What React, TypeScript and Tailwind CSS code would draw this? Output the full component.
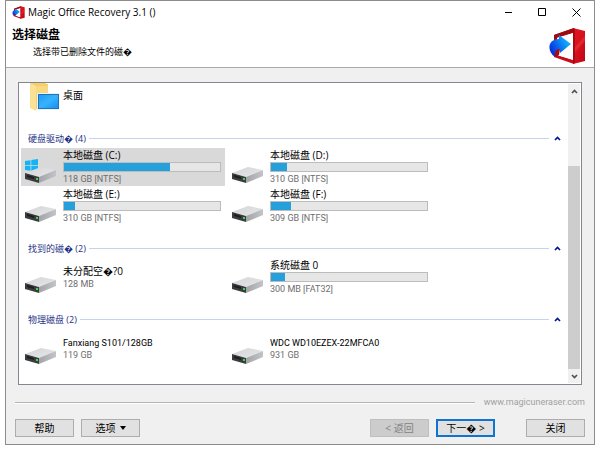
import type { ReactNode } from "react";

type Volume = { name: string; size: string; used?: number; system?: boolean; selected?: boolean };
type Group = { title: string; count: number; volumes: Volume[] };

const groups: Group[] = [
  {
    title: "硬盘驱动\uFFFD",
    count: 4,
    volumes: [
      { name: "本地磁盘 (C:)", size: "118 GB [NTFS]", used: 68, system: true, selected: true },
      { name: "本地磁盘 (D:)", size: "310 GB [NTFS]", used: 10 },
      { name: "本地磁盘 (E:)", size: "310 GB [NTFS]", used: 7 },
      { name: "本地磁盘 (F:)", size: "309 GB [NTFS]", used: 13 },
    ],
  },
  {
    title: "找到的磁\uFFFD",
    count: 2,
    volumes: [
      { name: "未分配空\uFFFD?0", size: "128 MB" },
      { name: "系统磁盘 0", size: "300 MB [FAT32]", used: 9 },
    ],
  },
  {
    title: "物理磁盘",
    count: 2,
    volumes: [
      { name: "Fanxiang S101/128GB", size: "119 GB" },
      { name: "WDC WD10EZEX-22MFCA0", size: "931 GB" },
    ],
  },
];

function Logo({ className }: { className: string }) {
  return (
    <svg viewBox="0 0 38 38" className={className} aria-hidden="true">
      <defs>
        <linearGradient id="red" x1="0" y1="0" x2="1" y2="1">
          <stop offset="0" stopColor="#e01822" />
          <stop offset="0.5" stopColor="#d8101c" />
          <stop offset="1" stopColor="#b80812" />
        </linearGradient>
        <linearGradient id="blue" x1="0" y1="0.8" x2="1" y2="0.2">
          <stop offset="0" stopColor="#0a1fd8" />
          <stop offset="0.45" stopColor="#0a6cf0" />
          <stop offset="1" stopColor="#14c8ff" />
        </linearGradient>
      </defs>
      <path d="M6 8 26 1v5L9 11v17l17 5v4L6 30Z" fill="#c20f18" />
      <path d="M9 11 25 6v27L9 28Z" fill="#fff" />
      <path d="M6 8 26 1v4L9 10v4H6Z" fill="#9c0b12" />
      <path d="M25 1 37 4v30l-12 3Z" fill="url(#red)" />
      <path d="M25 1 27 2v34l-2 1Z" fill="#a80912" />
      <path d="m27 20 10-11v5L27 25Z" fill="#f04a50" opacity="0.4" />
      <path d="M6 22h6l-1 6-3 2-2-2Z" fill="#a30a14" />
      <path d="M11 8 23 17 12 26v-4c-4 0-6 3-5 8C-1 25-1 12 11 12Z" fill="url(#blue)" />
    </svg>
  );
}

function DriveIcon() {
  return (
    <svg viewBox="0 0 32 17" className="h-[17px] w-8" aria-hidden="true">
      <defs>
        <linearGradient id="top" x1="0" y1="0" x2="1" y2="1">
          <stop offset="0" stopColor="#d4d5d7" />
          <stop offset="1" stopColor="#e6e7e9" />
        </linearGradient>
        <linearGradient id="side" x1="0" y1="0" x2="1" y2="0">
          <stop offset="0" stopColor="#a2a4a8" />
          <stop offset="1" stopColor="#c2c4c7" />
        </linearGradient>
      </defs>
      <path d="M0 7 16 1l15 3-16 7Z" fill="url(#top)" />
      <path d="M14 11 31 4v6l-17 7Z" fill="url(#side)" />
      <path d="m0 7 14 4v6L0 13Z" fill="#3a3c3f" />
      <path d="m2 9 7 2v2l-7-2Z" fill="#1d1e20" />
      <rect x="11" y="12" width="2" height="2" fill="#33e03c" />
    </svg>
  );
}

function WindowsMark() {
  return (
    <svg viewBox="0 0 13 13" className="h-[13px] w-[13px]" aria-hidden="true">
      <path d="M0 2 5.500 1.200V6H0ZM6.300 1.100 13 0v6H6.300ZM0 6.800h5.500v4.900L0 11ZM6.300 6.800H13V13l-6.700-1.100Z" fill="#12b4f5" />
    </svg>
  );
}

function DesktopIcon() {
  return (
    <svg viewBox="0 0 32 28" className="h-7 w-8" aria-hidden="true">
      <defs>
        <linearGradient id="screen" x1="0" y1="0" x2="1" y2="1">
          <stop offset="0" stopColor="#1f9cf5" />
          <stop offset="0.5" stopColor="#36b2fd" />
          <stop offset="1" stopColor="#1290f0" />
        </linearGradient>
      </defs>
      <path d="M3 0h16v1h2v25H7L3 24Z" fill="#f4cf6c" />
      <path d="M3 0 9 3v25l-6-3Z" fill="#fbe193" />
      <path d="M9 3h12v7H9Z" fill="#f8d980" />
      <rect x="10" y="10" width="23" height="17" fill="#e9f3fb" />
      <rect x="11.500" y="11.500" width="20" height="14" fill="url(#screen)" stroke="#2273b5" />
    </svg>
  );
}

function Chevron({ down = false }: { down?: boolean }) {
  return (
    <svg viewBox="0 0 7 5" className="h-[5px] w-[7px]" aria-hidden="true">
      <path d={down ? "M1 1 3.500 3.500 6 1" : "M1 4 3.500 1.500 6 4"} fill="none" stroke="currentColor" strokeWidth="1.700" />
    </svg>
  );
}

function VolumeTile({ v }: { v: Volume }) {
  const hasBar = v.used !== undefined;
  return (
    <li className={`flex h-[38px] gap-[6px] pr-1 pl-1 ${v.selected ? "bg-[#d9d9d9]" : ""}`}>
      <div className="flex w-8 shrink-0 flex-col justify-end pb-[3px]">
        {v.system && <WindowsMark />}
        <div className={v.system ? "-mt-[6px]" : ""}>
          <DriveIcon />
        </div>
      </div>
      <div className={`min-w-0 flex-1 whitespace-nowrap ${hasBar ? "pt-px" : "pt-[7px]"}`}>
        <div className="h-[13px] text-[10px] leading-[13px] text-black">
          {/^[A-Z]/.test(v.name) ? <span className="font-['Roboto',sans-serif] text-[9px]">{v.name}</span> : v.name}
        </div>
        {hasBar && (
          <div
            role="progressbar"
            aria-label={v.name}
            aria-valuenow={v.used}
            className="mb-px h-[10px] border border-[#bcbcbc] bg-[#e6e6e6]"
          >
            <div className="h-full bg-[#26a0da]" style={{ width: `${v.used}%` }} />
          </div>
        )}
        <div className="font-['Roboto',sans-serif] text-[9px] leading-[13px] text-[#6d6d6d]">{v.size}</div>
      </div>
    </li>
  );
}

function VolumeGroup({ group }: { group: Group }) {
  return (
    <section className="mb-3">
      <div className="flex h-5 items-center px-[7px]">
        <h2 className="pt-[2px] text-[9px] whitespace-pre text-[#1e3287]">
          {group.title} ({group.count})
        </h2>
        <div className="mr-[5px] ml-[3px] h-px flex-1 bg-[#c6d3ea]" />
        <button type="button" aria-label="收起" className="flex h-3 items-center text-[#00149a]">
          <Chevron />
        </button>
      </div>
      <ul className="grid grid-cols-[204px_204px] gap-x-[3px] gap-y-px pb-px">
        {group.volumes.map((v) => (
          <VolumeTile key={v.name} v={v} />
        ))}
      </ul>
    </section>
  );
}

function PushButton({ children, variant = "normal" }: { children: ReactNode; variant?: "normal" | "default" | "disabled" }) {
  const look = {
    normal: "border border-[#adadad] bg-[#e1e1e1] text-black",
    default: "border-2 border-[#0f74d0] bg-[#e1e1e1] text-black",
    disabled: "border border-[#bfbfbf] bg-[#cccccc] text-[#838383]",
  }[variant];
  return (
    <button
      type="button"
      disabled={variant === "disabled"}
      className={`flex h-[18px] w-[59px] items-center justify-center gap-1 text-[10px] leading-none whitespace-nowrap ${look}`}
    >
      {children}
    </button>
  );
}

const watermarks = [
  { text: "多多软件站", place: "top-[96px] left-[94px] text-[18px]" },
  { text: "多多软件站", place: "top-[96px] left-[394px] text-[18px]" },
  { text: "多多软件站", place: "top-[396px] left-[94px] text-[18px]" },
  { text: "多多软件站", place: "top-[396px] left-[394px] text-[18px]" },
  { text: "www.ddooo.com", place: "top-[148px] left-[168px] text-[22px]" },
  { text: "www.ddooo.com", place: "top-[148px] left-[468px] text-[22px]" },
];

export default function App() {
  return (
    <div className="relative overflow-hidden bg-white px-[5px] pb-[5px] font-['Open_Sans','Noto_Sans_CJK_SC',sans-serif]">
      <main className="border border-[#8c8c8c] bg-[#f0f0f0]">
        <header className="h-[67px] border-b border-[#a8a8a8] bg-white">
          <div className="flex h-[22px] items-center pr-[13px] pl-[6px]">
            <Logo className="h-[13px] w-[13px]" />
            <h1 className="ml-[3px] text-[10px] text-black">Magic Office Recovery 3.1 ()</h1>
            <div className="ml-auto flex items-center gap-[25px] text-black">
              <button type="button" aria-label="最小化">
                <svg viewBox="0 0 9 9" className="h-[9px] w-[9px]"><path d="M1 4.500h7" stroke="currentColor" /></svg>
              </button>
              <button type="button" aria-label="最大化">
                <svg viewBox="0 0 9 9" className="h-[9px] w-[9px]"><path d="M.5.5h7v7h-7z" fill="none" stroke="currentColor" /></svg>
              </button>
              <button type="button" aria-label="关闭窗口">
                <svg viewBox="0 0 9 9" className="h-[9px] w-[9px]"><path d="m.5.5 8 8M8.500.5l-8 8" stroke="currentColor" /></svg>
              </button>
            </div>
          </div>
          <div className="flex justify-between pr-2 pl-[6px]">
            <div className="pt-[3px]">
              <h2 className="text-[12px] leading-[18px] font-bold text-black">选择磁盘</h2>
              <p className="pl-[21px] text-[9px] leading-[15px] text-black">选择带已删除文件的磁{"\uFFFD"}</p>
            </div>
            <Logo className="mt-1 h-[38px] w-[38px]" />
          </div>
        </header>

        <div className="mx-3 mt-[14px] flex border border-[#828790] bg-white">
          <div className="h-[301px] min-w-0 flex-1 overflow-hidden pl-[2px]">
            <div className="flex h-[45px] gap-[4px] pl-[6px]">
              <DesktopIcon />
              <span className="pt-[5px] text-[10px] leading-[14px] text-black">桌面</span>
            </div>
            {groups.map((g) => (
              <VolumeGroup key={g.title} group={g} />
            ))}
          </div>
          <div className="my-[1px] mr-[1px] flex w-[12px] flex-col bg-[#f0f0f0]">
            <button type="button" aria-label="向上滚动" className="flex h-[14px] items-center justify-center text-[#505050]">
              <Chevron />
            </button>
            <div className="h-[68px]" />
            <div className="flex-1 bg-[#cdcdcd]" />
            <button type="button" aria-label="向下滚动" className="flex h-[14px] items-center justify-center text-[#505050]">
              <Chevron down />
            </button>
          </div>
        </div>

        <footer className="px-[9px] pt-[10px] pb-[7px]">
          <div className="flex h-4 items-center gap-[9px]">
            <div className="h-[2px] flex-1 border-b border-white bg-[#b4b4b4]" />
            <a href="#site" className="font-['Roboto',sans-serif] text-[9px] text-[#a0a0a0]">www.magicuneraser.com</a>
          </div>
          <div className="mt-2 flex gap-[7px]">
            <PushButton>帮助</PushButton>
            <PushButton>
              选项
              <svg viewBox="0 0 6 4" className="h-1 w-[6px]" aria-hidden="true"><path d="M0 0h6L3 4Z" fill="#000" /></svg>
            </PushButton>
            <div className="flex-1" />
            <PushButton variant="disabled">&lt; 返回</PushButton>
            <PushButton variant="default">下一{"\uFFFD"} &gt;</PushButton>
            <div className="w-[17px]" />
            <PushButton>关闭</PushButton>
          </div>
        </footer>
      </main>

      <div aria-hidden="true" className="pointer-events-none absolute inset-0 text-black/[0.02]">
        {watermarks.map(({ text, place }) => (
          <span key={place} className={`absolute -translate-x-1/2 -translate-y-1/2 -rotate-45 leading-none whitespace-nowrap ${place}`}>
            {text}
          </span>
        ))}
      </div>
    </div>
  );
}
